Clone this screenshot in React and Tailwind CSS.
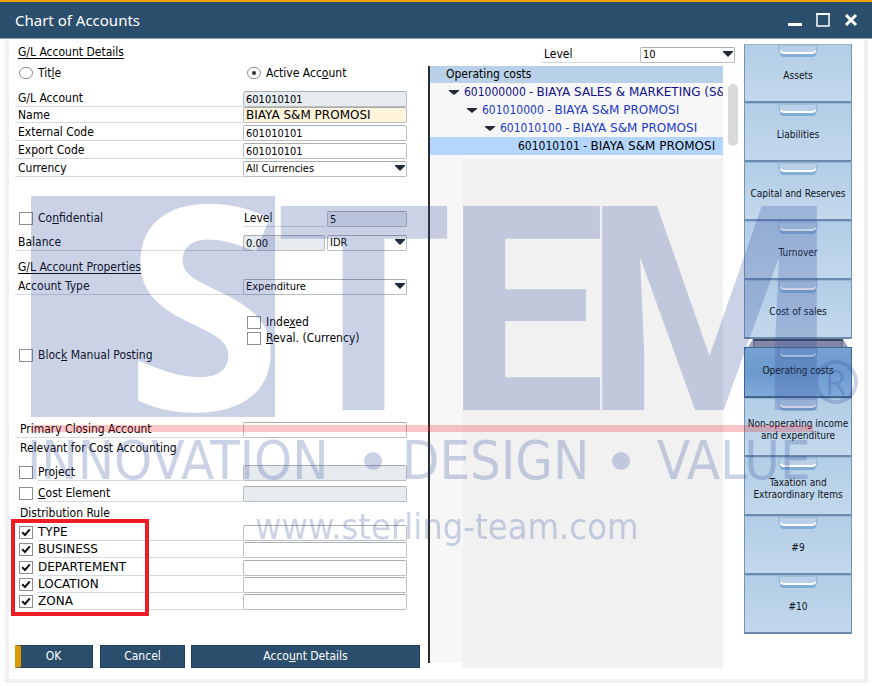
import React from 'react';

const FIELD =
  'h-4 w-full appearance-none rounded-[2px] border border-[#b9bdbf] border-t-[#a9adaf] px-[2px] leading-[14px] text-black outline-none';

function TextField({ id, label, value = '', tone = 'bg-white', type = 'text-[11px]' }) {
  return (
    <input id={id} aria-label={label} type="text" defaultValue={value} className={`${FIELD} ${type} ${tone}`} />
  );
}

function SelectField({ id, label, value }) {
  return (
    <span className="relative block w-full">
      <select id={id} aria-label={label} defaultValue={value} className={`${FIELD} block bg-white text-[11px]`}>
        <option>{value}</option>
      </select>
      <svg viewBox="0 0 10 6" className="pointer-events-none absolute top-[4px] right-[2px] h-[6px] w-[10px]" aria-hidden="true">
        <path d="M0 0h10v1L5 6 0 1z" fill="#222a38" />
      </svg>
    </span>
  );
}

function Row({ id, label, height = 'h-[18px]', className = '', inset = '', children }) {
  return (
    <div className={`flex items-end ${height} ${className}`}>
      <label htmlFor={id} className={`flex h-full w-[228px] shrink-0 items-center border-b border-[#d3dade] ${inset || 'pl-[3px]'}`}>
        {label}
      </label>
      <div className="w-[164px]">{children}</div>
    </div>
  );
}

function CheckBox({ id, checked = false, label }) {
  return (
    <span className="grid h-[13px] w-[14px] shrink-0 place-items-center">
      <input
        id={id}
        type="checkbox"
        aria-label={label}
        defaultChecked={checked}
        className="peer col-start-1 row-start-1 h-[13px] w-[14px] appearance-none border border-[#8b8f92] bg-white"
      />
      <svg viewBox="0 0 10 9" className="pointer-events-none col-start-1 row-start-1 hidden h-[9px] w-[10px] peer-checked:block" aria-hidden="true">
        <path d="M1.2 4.2 4 7 8.8 1.4" fill="none" stroke="#111" strokeWidth="2" />
      </svg>
    </span>
  );
}

function CheckLine({ id, children, className = '' }) {
  return (
    <div className={`flex h-4 items-center gap-[5px] ${className}`}>
      <CheckBox id={id} />
      <label htmlFor={id}>{children}</label>
    </div>
  );
}

function CheckRow({ id, label, name, checked, tone, height = 'h-[18px]', className = '' }) {
  return (
    <div className={`flex items-end ${height} ${className}`}>
      <div className="flex h-full w-[228px] shrink-0 items-center gap-[5px] pl-1">
        <CheckBox id={id} checked={checked} />
        <label htmlFor={id} className="flex h-full flex-1 items-center border-b border-[#d3dade]">
          <span>{label}</span>
        </label>
      </div>
      <div className="w-[164px]">
        <TextField id={`${id}-value`} label={name} tone={tone} />
      </div>
    </div>
  );
}

function Radio({ id, checked, children }) {
  return (
    <div className="flex items-center gap-[5px]">
      <span className="grid h-[13px] w-[14px] place-items-center">
        <input
          id={id}
          type="radio"
          name="account-kind"
          defaultChecked={checked}
          className="peer col-start-1 row-start-1 h-[12px] w-[14px] appearance-none rounded-full border border-[#8b8f92] bg-white"
        />
        <span className="pointer-events-none col-start-1 row-start-1 hidden h-[4px] w-[4px] rounded-full bg-[#2b3038] peer-checked:block" />
      </span>
      <label htmlFor={id}>{children}</label>
    </div>
  );
}

const U = ({ children }) => <span className="underline underline-offset-1">{children}</span>;

const RULES = [
  ['TYPE', 'h-[18px]'],
  ['BUSINESS', 'h-[17px]'],
  ['DEPARTEMENT', 'h-[18px]'],
  ['LOCATION', 'h-[17px]'],
  ['ZONA', 'h-[17px]'],
];

function AccountForm() {
  const button = 'h-[23px] border border-[#1f4260] bg-[#2b4e6c] pb-[2px] text-white';
  return (
    <form className="w-[405px] shrink-0 pt-1" onSubmit={(e) => e.preventDefault()}>
      <h2 className="h-4 pl-[3px] leading-4 underline underline-offset-2">G/L Account Details</h2>
      <div className="mt-1 flex h-[18px] items-center pl-1">
        <div className="w-[228px]">
          <Radio id="kind-title">Tit<U>l</U>e</Radio>
        </div>
        <Radio id="kind-active" checked>Active Acc<U>o</U>unt</Radio>
      </div>

      <Row id="gl" label="G/L Account" height="h-[17px]" className="mt-2">
        <TextField id="gl" value="601010101" tone="bg-[#e6ebf0]" />
      </Row>
      <Row id="name" label="Name" height="h-4">
        <TextField id="name" value="BIAYA S&M PROMOSI" tone="bg-[#fff4dc]" type="font-['DejaVu_Sans',sans-serif] text-[12px]" />
      </Row>
      <Row id="ext" label="External Code"><TextField id="ext" value="601010101" /></Row>
      <Row id="exp" label="Export Code"><TextField id="exp" value="601010101" /></Row>
      <Row id="cur" label="Currency"><SelectField id="cur" value="All Currencies" /></Row>

      <div className="mt-8 flex h-[18px] items-end">
        <div className="flex h-full w-[228px] items-center gap-[5px] pl-1">
          <CheckBox id="conf" />
          <label htmlFor="conf">Co<U>n</U>fidential</label>
        </div>
        <label htmlFor="lvl" className="flex h-full w-[84px] items-center border-b border-[#d3dade] pl-[1px]">Level</label>
        <div className="w-20"><TextField id="lvl" value="5" tone="bg-[#e6ebf0]" /></div>
      </div>
      <Row id="bal" label="Balance" className="mt-[6px]">
        <div className="flex gap-[2px]">
          <div className="w-[82px]"><TextField id="bal" value="0.00" tone="bg-[#e6ebf0]" /></div>
          <div className="w-20"><SelectField id="bal-cur" label="Balance currency" value="IDR" /></div>
        </div>
      </Row>

      <h2 className="mt-2 h-4 pl-[3px] leading-4 underline underline-offset-2">G/L Account Properties</h2>
      <Row id="type" label="Account Type" className="mt-[2px]"><SelectField id="type" value="Expenditure" /></Row>

      <div className="mt-[19px] pl-[232px]">
        <CheckLine id="idx">Inde<U>x</U>ed</CheckLine>
        <CheckLine id="reval"><U>R</U>eval. (Currency)</CheckLine>
      </div>
      <CheckLine id="block" className="mt-[1px] pl-1">Bloc<U>k</U> Manual Posting</CheckLine>

      <Row id="closing" label="Primary Closing Account" className="mt-[57px]" inset="pl-[5px]"><TextField id="closing" /></Row>
      <h3 className="mt-[2px] h-4 pl-[5px] leading-4">Relevant for Cost Accounting</h3>
      <CheckRow id="project" name="Project" label={<>Pro<U>j</U>ect</>} tone="bg-[#e6ebf0]" className="mt-[7px]" />
      <CheckRow id="element" name="Cost Element" label={<><U>C</U>ost Element</>} tone="bg-[#e6ebf0]" className="mt-[3px]" />
      <h3 className="mt-[3px] h-4 pl-[5px] leading-4">Distribution Rule</h3>
      <div className="relative mt-[2px] font-['DejaVu_Sans',sans-serif]">
        {RULES.map(([name, height]) => (
          <CheckRow key={name} id={name} name={name} label={name} height={height} checked />
        ))}
        <div className="pointer-events-none absolute -top-1 -left-1 h-[97px] w-[138px] border-4 border-[#ee1c25]" />
      </div>

      <div className="mt-[35px] flex">
        <button type="button" className={`${button} w-[78px] border-l-[6px] border-l-[#dd9b08] pr-[6px]`}>OK</button>
        <button type="button" className={`${button} ml-[7px] w-[85px]`}>Cancel</button>
        <button type="button" className={`${button} ml-[6px] flex-1`}>Acco<U>u</U>nt Details</button>
      </div>
    </form>
  );
}

const TREE = [
  { code: '601000000', name: 'BIAYA SALES & MARKETING (S&M)', pad: 'pl-[19px]', color: 'text-[#10108c]', open: true },
  { code: '601010000', name: 'BIAYA S&M PROMOSI', pad: 'pl-[37px]', color: 'text-[#2038c8]', open: true },
  { code: '601010100', name: 'BIAYA S&M PROMOSI', pad: 'pl-[55px]', color: 'text-[#2038c8]', open: true },
  { code: '601010101', name: 'BIAYA S&M PROMOSI', pad: 'pl-[88px]', color: 'text-black bg-[#b3d5fe]', open: false },
];

function AccountTree() {
  return (
    <section className="ml-2 flex min-w-0 flex-1 flex-col pt-[7px]">
      <div className="flex h-4 justify-end">
        <label htmlFor="tree-level" className="w-[99px] border-b border-[#d3dade] pl-[3px] leading-[14px]">Level</label>
        <div className="w-[95px]"><SelectField id="tree-level" value="10" /></div>
      </div>
      <div className="mt-[3px] flex flex-1">
        <div className="mb-[5px] flex min-w-0 flex-1 flex-col border-l-2 border-[#2c2c2c]">
          <h2 className="h-[17px] bg-[#b9d1e8] pl-4 leading-4">Operating costs</h2>
          <ul className="bg-[#f7f7f7] pb-1">
            {TREE.map((n) => (
              <li key={n.code} className={`flex h-[18px] items-center gap-[5px] overflow-hidden whitespace-nowrap ${n.pad} ${n.color}`}>
                {n.open && (
                  <svg viewBox="0 0 10 5" className="h-[5px] w-[10px] shrink-0" aria-hidden="true">
                    <path d="M0 0h10v1L5 5 0 1z" fill="#222a38" />
                  </svg>
                )}
                <span>
                  {n.code} - <span className="font-['DejaVu_Sans',sans-serif]">{n.name}</span>
                </span>
              </li>
            ))}
          </ul>
          <div className="flex flex-1 bg-[#f7f7f7]">
            <div className="-mb-[5px] ml-[33px] flex-1 bg-[#f1f1f1]" />
          </div>
        </div>
        <div className="mt-[18px] mr-[-3px] ml-[5px] h-[62px] w-[10px] shrink-0 rounded-full bg-[#d9dbdb]" />
      </div>
    </section>
  );
}

const DRAWERS = [
  'Assets',
  'Liabilities',
  'Capital and Reserves',
  'Turnover',
  'Cost of sales',
  'Operating costs',
  'Non-operating income and expenditure',
  'Taxation and Extraordinary Items',
  '#9',
  '#10',
];

function Handle({ active }) {
  return (
    <svg viewBox="0 0 44 14" className="mx-auto block h-[14px] w-[44px]" aria-hidden="true">
      <path d="M4 6v3q0 3 4 3h28q4 0 4-3V6z" fill="#5f95c9" opacity=".6" />
      <path d="M3 0v5q0 4 4 4h30q4 0 4-4V0z" fill={active ? '#7fa8d8' : '#b9d1e8'} stroke={active ? '#6189b8' : '#8db0d2'} />
      <path d="M5 6.5q1 1.5 3 1.5h28q2 0 3-1.5" fill="none" stroke={active ? '#c5d9ee' : '#fff'} strokeWidth="2" strokeLinecap="round" />
    </svg>
  );
}

function Drawers() {
  return (
    <nav className="w-[108px] shrink-0 pt-1 text-[10px] leading-3 text-[#10151c]">
      {DRAWERS.map((name) => {
        const active = name === 'Operating costs';
        return (
          <React.Fragment key={name}>
            {active && (
              <svg viewBox="0 0 100 8" preserveAspectRatio="none" className="mx-1 block h-2 w-[100px]" aria-hidden="true">
                <path d="M5 0h90l5 8H0z" fill="#9aa3bf" />
                <path d="M6 1h88v7H6z" fill="#8288a8" />
                <path d="M5 1h90" stroke="#3a4456" strokeWidth="2" />
                <path d="M6 0v8M94 0v8" stroke="#4f586e" />
              </svg>
            )}
            <button
              type="button"
              className={`block w-full border border-b-2 ${
                active
                  ? 'h-[51px] border-[#42658f] bg-linear-to-b from-[#76a2d3] via-[#6c9ace] to-[#7fa9d9]'
                  : 'h-[59px] border-x-[#7194bb] border-t-[#9ab8d6] border-b-[#6a8aae] bg-linear-to-b from-[#b2cde6] to-[#c3d8ec]'
              }`}
            >
              <span className={`flex h-full flex-col ${active ? 'pb-4' : 'pb-2'}`}>
                <Handle active={active} />
                <span className="flex flex-1 items-center justify-center px-[1px]">{name}</span>
              </span>
            </button>
          </React.Fragment>
        );
      })}
    </nav>
  );
}

function Watermark() {
  return (
    <svg viewBox="0 0 872 686" className="pointer-events-none absolute top-0 left-0 h-[686px] w-[872px]" aria-hidden="true">
      <mask id="s-cut">
        <rect x="31" y="196" width="244" height="221" fill="#fff" />
        <text x="125" y="410" fontFamily="Open Sans" fontWeight="700" fontSize="285" fill="#000">S</text>
      </mask>
      <g fill="#3750a0" opacity=".25">
        <rect x="31" y="196" width="244" height="221" mask="url(#s-cut)" />
        <g fontFamily="Roboto" fontWeight="700" fontSize="287">
          <text x="275" y="410">T</text>
          <text x="445" y="410">E</text>
          <text x="584" y="410">M</text>
        </g>
        <circle cx="836" cy="382" r="20" fill="none" stroke="#3750a0" strokeWidth="4" />
        <text x="825" y="395" fontFamily="Open Sans" fontWeight="500" fontSize="34">R</text>
        <g fontFamily="DejaVu Sans Condensed, DejaVu Sans" fontSize="54">
          <text x="27" y="479">INNOVATION</text>
          <text x="402" y="479">DESIGN</text>
          <text x="657" y="479">VALUE</text>
        </g>
        <circle cx="373" cy="461" r="9" />
        <circle cx="621" cy="461" r="9" />
        <text x="255" y="539" fontFamily="DejaVu Sans Condensed, DejaVu Sans" fontSize="36">www.sterling-team.com</text>
      </g>
      <rect x="31" y="425" width="782" height="7" fill="#ee1c25" opacity=".25" />
    </svg>
  );
}

export default function App() {
  return (
    <div className="relative overflow-hidden bg-white font-['DejaVu_Sans_Condensed','DejaVu_Sans',sans-serif] text-[12px] leading-4 text-black">
      <header className="flex h-[39px] items-center justify-between border-t-2 border-b border-t-[#f2a200] border-b-[#8fa6ba] bg-[#2b4e6c] pr-[14px] pl-[15px] text-white">
        <h1 className="font-['Noto_Sans',sans-serif] text-[15px] leading-5">Chart of Accounts</h1>
        <div className="flex items-center gap-[14px]">
          <button type="button" aria-label="Minimize">
            <svg viewBox="0 0 14 14" className="block h-[14px] w-[14px]"><path d="M0 11.5h14" stroke="#fff" strokeWidth="3" /></svg>
          </button>
          <button type="button" aria-label="Maximize">
            <svg viewBox="0 0 14 14" className="block h-[14px] w-[14px]"><path d="M1 1h12v12H1z" fill="none" stroke="#fff" strokeWidth="1.5" /><path d="M0 1h14" stroke="#fff" strokeWidth="2" /></svg>
          </button>
          <button type="button" aria-label="Close">
            <svg viewBox="0 0 14 14" className="block h-[14px] w-[14px]"><path d="m2 2 10 10M12 2 2 12" stroke="#fff" strokeWidth="3" /></svg>
          </button>
        </div>
      </header>
      <main className="mt-[1px] mr-1 mb-[3px] ml-[5px] flex border-4 border-t-0 border-[#f1f1f1] pr-3 pb-[11px] pl-[6px]">
        <AccountForm />
        <div className="flex min-w-0 flex-1 pr-[9px]">
          <AccountTree />
        </div>
        <Drawers />
      </main>
      <Watermark />
    </div>
  );
}
